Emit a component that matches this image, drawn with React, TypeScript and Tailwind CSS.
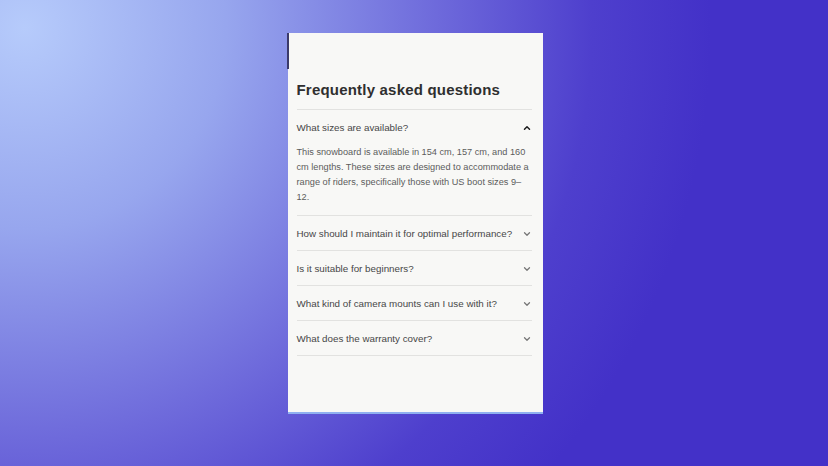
import { useState } from "react";

type Faq = {
  question: string;
  answer: string;
};

const faqs: Faq[] = [
  {
    question: "What sizes are available?",
    answer:
      "This snowboard is available in 154 cm, 157 cm, and 160 cm lengths. These sizes are designed to accommodate a range of riders, specifically those with US boot sizes 9–12.",
  },
  {
    question: "How should I maintain it for optimal performance?",
    answer: "Wax the base regularly and keep the edges sharp. Store it dry, away from direct heat.",
  },
  {
    question: "Is it suitable for beginners?",
    answer: "Yes. The forgiving flex and catch-free profile make it easy to learn on.",
  },
  {
    question: "What kind of camera mounts can I use with it?",
    answer: "Any standard adhesive action-camera mount works on the top sheet.",
  },
  {
    question: "What does the warranty cover?",
    answer: "Manufacturing defects are covered for two years from the date of purchase.",
  },
];

function Chevron({ open }: { open: boolean }) {
  return (
    <svg
      width="10"
      height="10"
      viewBox="0 0 24 24"
      fill="none"
      stroke="currentColor"
      strokeWidth={open ? 3.6 : 3}
      strokeLinecap="round"
      strokeLinejoin="round"
      className={open ? "shrink-0 text-[#1e1e1e]" : "shrink-0 text-[#777]"}
    >
      {open ? <path d="M6 15l6-6 6 6" /> : <path d="M6 9l6 6 6-6" />}
    </svg>
  );
}

export default function App() {
  const [openIndex, setOpenIndex] = useState<number | null>(0);

  return (
    <div className="flex h-[466px] w-[828px] justify-center bg-[radial-gradient(circle_at_3%_6%,#b6cbfb_0%,#97a6ee_22%,#6e6adb_45%,#4e3fcd_62%,#4331c8_75%)] pt-[33px] font-['Liberation_Sans',Arial,sans-serif]">
      <section className="relative ml-[2px] h-[381px] w-[255px] border-b-2 border-b-[#8fb0f0] bg-[#f8f8f6] pl-[9px] pr-[11px] pt-[45px]">
        {/* thin dark handle on the card's upper left edge */}
        <div className="absolute left-[-1px] top-0 h-[36px] w-[2px] bg-[#3b3a6a]" />
        <h2 className="text-[15px] font-bold leading-[24px] tracking-[0.2px] text-[#2f2f2f]">Frequently asked questions</h2>
        <div className="mt-[7px] border-t border-[#e2e2e0]">
          {faqs.map((faq, index) => {
            const open = openIndex === index;
            return (
              <div key={faq.question} className="border-b border-[#e2e2e0]">
                <button
                  type="button"
                  onClick={() => setOpenIndex(open ? null : index)}
                  className="flex h-[34px] w-full items-center justify-between gap-2 pt-[2px] text-left text-[9.8px] text-[#474747]"
                >
                  <span>{faq.question}</span>
                  <Chevron open={open} />
                </button>
                {open ? (
                  <p className="mt-[1px] pb-[10px] text-[9.2px] leading-[15px] text-[#5c5c5c]">{faq.answer}</p>
                ) : null}
              </div>
            );
          })}
        </div>
      </section>
    </div>
  );
}
